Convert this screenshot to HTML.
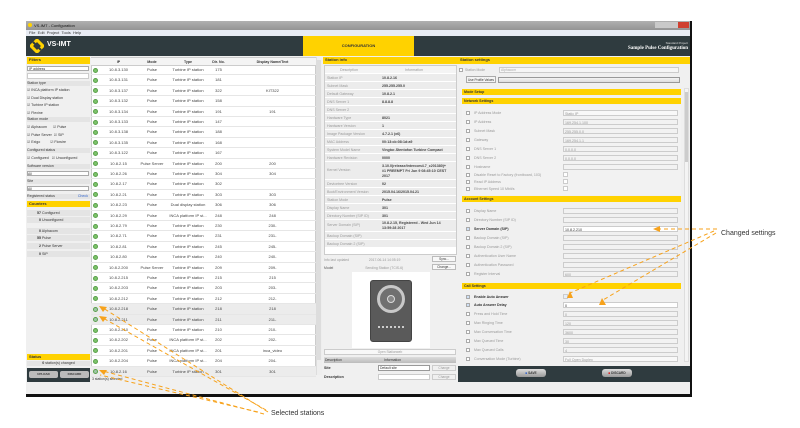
<!DOCTYPE html>
<html><head><meta charset="utf-8"><style>
*{margin:0;padding:0;box-sizing:border-box}
body{width:800px;height:428px;background:#fff;position:relative;overflow:hidden;font-family:"Liberation Sans",sans-serif;font-size:4px;color:#333}
.a{position:absolute}
.y{background:#ffd200;color:#333;font-weight:bold;font-size:4px;line-height:6px;padding-left:2px}
.g{background:#e4e4e4}
.tr{position:absolute;left:91px;width:225px;height:10.4px;border-bottom:1px solid #e6e6e6;line-height:10px;font-size:4px;color:#444}
.tr span{position:absolute;text-align:center}
.tr .i{left:2px;top:2.5px;width:5px;height:5px;border-radius:50%;background:#7dc36b;border:1px solid #5aa04a}
.c1{left:10px;width:35px}.c2{left:45px;width:32px}.c3{left:77px;width:40px}.c4{left:117px;width:21px}.c5{left:138px;width:87px}
.sel{background:#ececec}
.ir{position:absolute;left:325px;width:131px;height:8px;line-height:8px;border-bottom:1px solid #fff;background:#ececec;font-size:3.6px}
.ir b{position:absolute;left:2px;color:#999;font-weight:normal}
.ir i{position:absolute;left:57px;font-style:normal;color:#444;font-weight:bold}
.sr{position:absolute;left:465px;width:215px;height:6px;font-size:3.6px;color:#999;line-height:6px}
.sr .cb{position:absolute;left:1px;top:1px;width:4px;height:4px;border:1px solid #aaa;background:#fff}
.sr .l{position:absolute;left:9px}
.sr .f{position:absolute;left:98px;width:115px;height:6px;border:1px solid #ccc;background:#f2f2f2;padding-left:1px}
.bar{position:absolute;left:462px;width:219px;height:6px;background:#ffd200;font-weight:bold;font-size:3.6px;line-height:6px;padding-left:2px}
.lf{position:absolute;left:27px;width:63px;font-size:3.6px;line-height:6px}
</style></head><body>
<div class="a" style="left:26px;top:21px;width:666px;height:376px;background:#f0f0f0"></div>
<div class="a" style="left:26px;top:21px;width:666px;height:9px;background:linear-gradient(#b0b0b0,#949494);color:#111;font-size:4px;line-height:9px;padding-left:8px">VS-IMT - Configuration</div>
<div class="a" style="left:28px;top:23px;width:4px;height:4px;border-radius:50%;background:#ffd200"></div>
<div class="a" style="left:655px;top:22px;width:34px;height:6px;background:#c9c9c9"></div>
<div class="a" style="left:678px;top:22px;width:11px;height:6px;background:#d04030"></div>
<div class="a" style="left:26px;top:30px;width:666px;height:6px;background:#e8ecf4;font-size:4px;line-height:6px;padding-left:3px">File&nbsp;&nbsp;Edit&nbsp;&nbsp;Project&nbsp;&nbsp;Tools&nbsp;&nbsp;Help</div>
<div class="a" style="left:26px;top:36px;width:666px;height:20px;background:#2f3b3f"></div>
<svg class="a" style="left:30px;top:39px" width="14" height="14" viewBox="0 0 14 14"><path d="M7 1 L13 7 L7 13 L1 7Z" fill="none" stroke="#ffd200" stroke-width="3"/><path d="M3 3 L11 11" stroke="#2f3b3f" stroke-width="2"/></svg>
<div class="a" style="left:47px;top:41px;color:#fff;font-weight:bold;font-size:7px">VS-IMT</div>
<div class="a" style="left:303px;top:36px;width:111px;height:20px;background:#ffd200;text-align:center;line-height:20px;font-weight:bold;font-size:4px">CONFIGURATION</div>
<div class="a" style="left:600px;top:41px;width:88px;text-align:right;color:#ddd;font-size:3px">Standard Project</div>
<div class="a" style="left:560px;top:46px;width:128px;text-align:right;color:#fff;font-weight:bold;font-size:5px;font-family:'Liberation Serif',serif">Sample Pulse Configuration</div>

<div class="a y" style="left:27px;top:57px;width:63px;height:7px">Filters</div>
<div class="a" style="left:27px;top:66px;width:62px;height:5px;background:#fff;border:1px solid #aaa;font-size:3.4px;line-height:4px;padding-left:1px">IP address</div>
<div class="a" style="left:27px;top:73px;width:62px;height:6px;background:#fff;border:1px solid #ccc"></div>
<div class="lf g" style="top:81px;height:5px;line-height:5px">Station type</div>
<div class="lf" style="top:87px">☑ INCA platform IP station</div>
<div class="lf" style="top:95px">☑ Dual Display station</div>
<div class="lf" style="top:102px">☑ Turbine IP station</div>
<div class="lf" style="top:110px">☑ Flexine</div>
<div class="lf g" style="top:117px;height:5px;line-height:5px">Station mode</div>
<div class="lf" style="top:124px">☑ Alphacom &nbsp;&nbsp;&nbsp;&nbsp;&nbsp;☑ Pulse</div>
<div class="lf" style="top:132px">☑ Pulse Server &nbsp;☑ SIP</div>
<div class="lf" style="top:139px">☑ Exigo &nbsp;&nbsp;&nbsp;&nbsp;&nbsp;&nbsp;&nbsp;&nbsp;&nbsp;☑ Flowire</div>
<div class="lf g" style="top:148px;height:5px;line-height:5px">Configured status</div>
<div class="lf" style="top:155px">☑ Configured &nbsp;&nbsp;☑ Unconfigured</div>
<div class="lf g" style="top:164px;height:5px;line-height:5px">Software version</div>
<div class="a" style="left:27px;top:171px;width:62px;height:5px;background:#fff;border:1px solid #aaa;font-size:3.4px;line-height:4px">All</div>
<div class="lf g" style="top:179px;height:5px;line-height:5px">Site</div>
<div class="a" style="left:27px;top:186px;width:62px;height:5px;background:#fff;border:1px solid #aaa;font-size:3.4px;line-height:4px">All</div>
<div class="lf g" style="top:194px;height:5px;line-height:5px">Registered status <span style="float:right;color:#36c;padding-right:2px">Check</span></div>
<div class="a y" style="left:27px;top:201px;width:63px;height:6px">Counters</div>
<div class="lf g" style="top:210px;line-height:6px;padding-left:10px"><b>57</b> Configured</div>
<div class="lf g" style="top:217px;line-height:6px;padding-left:12px"><b>0</b> Unconfigured</div>
<div class="lf g" style="top:228px;line-height:6px;padding-left:12px"><b>0</b> Alphacom</div>
<div class="lf g" style="top:235px;line-height:6px;padding-left:10px"><b>55</b> Pulse</div>
<div class="lf g" style="top:243px;line-height:6px;padding-left:12px"><b>2</b> Pulse Server</div>
<div class="lf g" style="top:251px;line-height:6px;padding-left:12px"><b>0</b> SIP</div>
<div class="a y" style="left:27px;top:354px;width:63px;height:6px">Status</div>
<div class="lf g" style="top:361px;line-height:5px;height:5px;text-align:center"><b>0</b> station(s) changed</div>
<div class="a" style="left:27px;top:368px;width:63px;height:14px;background:#2f3b3f"></div>
<div class="a" style="left:29px;top:371px;width:29px;height:7px;background:#bbb;border-radius:2px;font-size:3px;line-height:7px;text-align:center;font-weight:bold">UPLOAD</div>
<div class="a" style="left:60px;top:371px;width:29px;height:7px;background:#bbb;border-radius:2px;font-size:3px;line-height:7px;text-align:center;font-weight:bold">DISCARD</div>

<div class="a" style="left:91px;top:57px;width:225px;height:318px;background:#fff;border:1px solid #ccc"></div>
<div class="a" style="left:91px;top:58px;width:225px;height:8px;background:#f4f4f4;border-bottom:1px solid #ccc;font-weight:bold;font-size:3.6px;line-height:8px">
<span class="a" style="left:10px;width:35px;text-align:center">IP</span><span class="a" style="left:45px;width:32px;text-align:center">Mode</span><span class="a" style="left:77px;width:40px;text-align:center">Type</span><span class="a" style="left:117px;width:21px;text-align:center">Dir. No.</span><span class="a" style="left:138px;width:87px;text-align:center">Display Name/Text</span></div>
<div class="a" style="left:316px;top:57px;width:6px;height:318px;background:#eee;border-left:1px solid #ddd"></div>
<div class="a" style="left:317px;top:60px;width:4px;height:300px;background:#ddd"></div>

<div class="tr" style="top:65px"><span class="i"></span><span class="c1">10.8.3.130</span><span class="c2">Pulse</span><span class="c3">Turbine IP station</span><span class="c4">175</span><span class="c5"></span></div>
<div class="tr" style="top:75.4px"><span class="i"></span><span class="c1">10.8.3.131</span><span class="c2">Pulse</span><span class="c3">Turbine IP station</span><span class="c4">181</span><span class="c5"></span></div>
<div class="tr" style="top:85.8px"><span class="i"></span><span class="c1">10.8.3.137</span><span class="c2">Pulse</span><span class="c3">Turbine IP station</span><span class="c4">322</span><span class="c5">KIT322</span></div>
<div class="tr" style="top:96.2px"><span class="i"></span><span class="c1">10.8.3.132</span><span class="c2">Pulse</span><span class="c3">Turbine IP station</span><span class="c4">158</span><span class="c5"></span></div>
<div class="tr" style="top:106.6px"><span class="i"></span><span class="c1">10.8.3.134</span><span class="c2">Pulse</span><span class="c3">Turbine IP station</span><span class="c4">191</span><span class="c5">191</span></div>
<div class="tr" style="top:117px"><span class="i"></span><span class="c1">10.8.3.133</span><span class="c2">Pulse</span><span class="c3">Turbine IP station</span><span class="c4">147</span><span class="c5"></span></div>
<div class="tr" style="top:127.4px"><span class="i"></span><span class="c1">10.8.3.138</span><span class="c2">Pulse</span><span class="c3">Turbine IP station</span><span class="c4">188</span><span class="c5"></span></div>
<div class="tr" style="top:137.8px"><span class="i"></span><span class="c1">10.8.3.135</span><span class="c2">Pulse</span><span class="c3">Turbine IP station</span><span class="c4">168</span><span class="c5"></span></div>
<div class="tr" style="top:148.2px"><span class="i"></span><span class="c1">10.8.3.122</span><span class="c2">Pulse</span><span class="c3">Turbine IP station</span><span class="c4">167</span><span class="c5"></span></div>
<div class="tr" style="top:158.6px"><span class="i"></span><span class="c1">10.8.2.15</span><span class="c2">Pulse Server</span><span class="c3">Turbine IP station</span><span class="c4">200</span><span class="c5">200</span></div>
<div class="tr" style="top:169px"><span class="i"></span><span class="c1">10.8.2.26</span><span class="c2">Pulse</span><span class="c3">Turbine IP station</span><span class="c4">304</span><span class="c5">304</span></div>
<div class="tr" style="top:179.4px"><span class="i"></span><span class="c1">10.8.2.17</span><span class="c2">Pulse</span><span class="c3">Turbine IP station</span><span class="c4">302</span><span class="c5"></span></div>
<div class="tr" style="top:189.8px"><span class="i"></span><span class="c1">10.8.2.21</span><span class="c2">Pulse</span><span class="c3">Turbine IP station</span><span class="c4">303</span><span class="c5">303</span></div>
<div class="tr" style="top:200.2px"><span class="i"></span><span class="c1">10.8.2.23</span><span class="c2">Pulse</span><span class="c3">Dual display station</span><span class="c4">306</span><span class="c5">306</span></div>
<div class="tr" style="top:210.6px"><span class="i"></span><span class="c1">10.8.2.29</span><span class="c2">Pulse</span><span class="c3">INCA platform IP st...</span><span class="c4">248</span><span class="c5">248</span></div>
<div class="tr" style="top:221px"><span class="i"></span><span class="c1">10.8.2.79</span><span class="c2">Pulse</span><span class="c3">Turbine IP station</span><span class="c4">230</span><span class="c5">230-</span></div>
<div class="tr" style="top:231.4px"><span class="i"></span><span class="c1">10.8.2.71</span><span class="c2">Pulse</span><span class="c3">Turbine IP station</span><span class="c4">231</span><span class="c5">231-</span></div>
<div class="tr" style="top:241.8px"><span class="i"></span><span class="c1">10.8.2.81</span><span class="c2">Pulse</span><span class="c3">Turbine IP station</span><span class="c4">245</span><span class="c5">245-</span></div>
<div class="tr" style="top:252.2px"><span class="i"></span><span class="c1">10.8.2.80</span><span class="c2">Pulse</span><span class="c3">Turbine IP station</span><span class="c4">240</span><span class="c5">240-</span></div>
<div class="tr" style="top:262.6px"><span class="i"></span><span class="c1">10.8.2.200</span><span class="c2">Pulse Server</span><span class="c3">Turbine IP station</span><span class="c4">209</span><span class="c5">209-</span></div>
<div class="tr" style="top:273px"><span class="i"></span><span class="c1">10.8.2.215</span><span class="c2">Pulse</span><span class="c3">Turbine IP station</span><span class="c4">215</span><span class="c5">215</span></div>
<div class="tr" style="top:283.4px"><span class="i"></span><span class="c1">10.8.2.203</span><span class="c2">Pulse</span><span class="c3">Turbine IP station</span><span class="c4">203</span><span class="c5">203-</span></div>
<div class="tr" style="top:293.8px"><span class="i"></span><span class="c1">10.8.2.212</span><span class="c2">Pulse</span><span class="c3">Turbine IP station</span><span class="c4">212</span><span class="c5">212-</span></div>
<div class="tr sel" style="top:304.2px"><span class="i" style="background:#9fc6a8"></span><span class="c1">10.8.2.218</span><span class="c2">Pulse</span><span class="c3">Turbine IP station</span><span class="c4">218</span><span class="c5">218</span></div>
<div class="tr sel" style="top:314.6px"><span class="i" style="background:#9fc6a8"></span><span class="c1">10.8.2.211</span><span class="c2">Pulse</span><span class="c3">Turbine IP station</span><span class="c4">211</span><span class="c5">211-</span></div>
<div class="tr" style="top:325px"><span class="i"></span><span class="c1">10.8.2.210</span><span class="c2">Pulse</span><span class="c3">Turbine IP station</span><span class="c4">210</span><span class="c5">210-</span></div>
<div class="tr" style="top:335.4px"><span class="i"></span><span class="c1">10.8.2.202</span><span class="c2">Pulse</span><span class="c3">INCA platform IP st...</span><span class="c4">202</span><span class="c5">202-</span></div>
<div class="tr" style="top:345.8px"><span class="i"></span><span class="c1">10.8.2.201</span><span class="c2">Pulse</span><span class="c3">INCA platform IP st...</span><span class="c4">201</span><span class="c5">inca_video</span></div>
<div class="tr" style="top:356.2px"><span class="i"></span><span class="c1">10.8.2.204</span><span class="c2">Pulse</span><span class="c3">INCA platform IP st...</span><span class="c4">204</span><span class="c5">204-</span></div>
<div class="tr sel" style="top:366.6px"><span class="i" style="background:#9fc6a8"></span><span class="c1">10.8.2.16</span><span class="c2">Pulse</span><span class="c3">Turbine IP station</span><span class="c4">301</span><span class="c5">301</span></div>
<div class="a" style="left:92px;top:377px;font-size:3.4px">3 station(s) selected</div>

<div class="a y" style="left:323px;top:57px;width:135px;height:7px">Station info</div>
<div class="a" style="left:324px;top:65px;width:133px;height:190px;background:#fff;border:1px solid #ccc"></div>
<div class="ir" style="top:66px;background:#f4f4f4"><b style="left:15px">Description</b><i style="left:80px;color:#999;font-weight:normal">Information</i></div>
<div class="ir" style="top:74px"><b>Station IP</b><i>10.8.2.16</i></div>
<div class="ir" style="top:82px"><b>Subnet Mask</b><i>255.255.255.0</i></div>
<div class="ir" style="top:90px"><b>Default Gateway</b><i>10.8.2.1</i></div>
<div class="ir" style="top:98px"><b>DNS Server 1</b><i>8.8.8.8</i></div>
<div class="ir" style="top:106px"><b>DNS Server 2</b><i></i></div>
<div class="ir" style="top:114px"><b>Hardware Type</b><i>8021</i></div>
<div class="ir" style="top:122px"><b>Hardware Version</b><i>1</i></div>
<div class="ir" style="top:130px"><b>Image Package Version</b><i>4.7.2.1 (x6)</i></div>
<div class="ir" style="top:138px"><b>MAC Address</b><i>00:13:cb:08:1d:a9</i></div>
<div class="ir" style="top:146px"><b>System Model Name</b><i>Vingtor-Stentofon Turbine Compact</i></div>
<div class="ir" style="top:154px"><b>Hardware Revision</b><i>0000</i></div>
<div class="ir" style="top:162px;height:18px;line-height:5px"><b style="top:6px">Kernel Version</b><i style="top:2px">3.10.0(release/intercom4.7_c201380)+<br>#1 PREEMPT Fri Jun 9 08:45:10 CEST<br>2017</i></div>
<div class="ir" style="top:180px"><b>Devicetree Version</b><i>02</i></div>
<div class="ir" style="top:188px"><b>Boot/Environment Version</b><i>2015.04.16/2015.04.21</i></div>
<div class="ir" style="top:196px"><b>Station Mode</b><i>Pulse</i></div>
<div class="ir" style="top:204px"><b>Display Name</b><i>301</i></div>
<div class="ir" style="top:212px"><b>Directory Number (SIP ID)</b><i>301</i></div>
<div class="ir" style="top:220px;height:12px;line-height:5px"><b style="top:3px">Server Domain (SIP)</b><i style="top:1px">10.8.2.15, Registered - Wed Jun 14<br>13:59:28 2017</i></div>
<div class="ir" style="top:232px"><b>Backup Domain (SIP)</b><i></i></div>
<div class="ir" style="top:240px"><b>Backup Domain 2 (SIP)</b><i></i></div>
<div class="a" style="left:324px;top:258px;font-size:3.4px;color:#999">Info last updated &nbsp;&nbsp;&nbsp;&nbsp;&nbsp;&nbsp;&nbsp;&nbsp;&nbsp;&nbsp;&nbsp;&nbsp;&nbsp;&nbsp;&nbsp;&nbsp;&nbsp;&nbsp;&nbsp;&nbsp;2017-06-14 14:05:19</div>
<div class="a" style="left:324px;top:266px;font-size:3.4px;color:#555">Model &nbsp;&nbsp;&nbsp;&nbsp;&nbsp;&nbsp;&nbsp;&nbsp;&nbsp;&nbsp;&nbsp;&nbsp;&nbsp;&nbsp;&nbsp;&nbsp;&nbsp;&nbsp;&nbsp;&nbsp;&nbsp;&nbsp;&nbsp;&nbsp;&nbsp;&nbsp;&nbsp;&nbsp;&nbsp;&nbsp;&nbsp;&nbsp;&nbsp;<span style="color:#999">Sending Station (TCIS-6)</span></div>
<div class="a" style="left:432px;top:256px;width:24px;height:6px;border:1px solid #bbb;background:#f8f8f8;font-size:3.2px;text-align:center;line-height:5px">Sync...</div>
<div class="a" style="left:432px;top:264px;width:24px;height:6px;border:1px solid #bbb;background:#f8f8f8;font-size:3.2px;text-align:center;line-height:5px">Change...</div>
<div class="a" style="left:352px;top:272px;width:78px;height:76px;background:#fff"></div>
<div class="a" style="left:370px;top:280px;width:42px;height:62px;background:#5a5a5a;border-radius:3px;border:1px solid #444"></div>
<div class="a" style="left:377px;top:285px;width:28px;height:28px;border-radius:50%;border:3px solid #c8c8c8;background:#707070"></div>
<div class="a" style="left:387px;top:295px;width:8px;height:8px;border-radius:50%;border:1px solid #ddd;background:#888"></div>
<div class="a" style="left:378px;top:326px;width:26px;height:3px;border-top:2px dotted #ccc"></div>

<div class="a" style="left:324px;top:349px;width:132px;height:6px;border:1px solid #ccc;background:#f8f8f8;font-size:3.2px;text-align:center;line-height:5px;color:#999">Open Stationweb</div>
<div class="a" style="left:324px;top:357px;width:132px;height:6px;background:linear-gradient(#ddd,#bbb);font-size:3.4px;line-height:6px">&nbsp;Description<span style="position:absolute;left:60px">Information</span></div>
<div class="a" style="left:324px;top:366px;font-size:3.6px;font-weight:bold">Site</div>
<div class="a" style="left:378px;top:365px;width:52px;height:6px;border:1px solid #999;background:#fff;font-size:3.4px;line-height:5px">&nbsp;Default site</div>
<div class="a" style="left:432px;top:365px;width:24px;height:6px;border:1px solid #ccc;font-size:3.2px;text-align:center;line-height:5px;color:#999">Change</div>
<div class="a" style="left:324px;top:375px;font-size:3.6px;font-weight:bold">Description</div>
<div class="a" style="left:378px;top:374px;width:52px;height:6px;border:1px solid #ccc;background:#fff"></div>
<div class="a" style="left:432px;top:374px;width:24px;height:6px;border:1px solid #ccc;font-size:3.2px;text-align:center;line-height:5px;color:#999">Change</div>

<div class="a y" style="left:458px;top:57px;width:233px;height:7px">Station settings</div>
<div class="a" style="left:459px;top:68px;width:4px;height:4px;border:1px solid #aaa;background:#fff"></div>
<div class="a" style="left:465px;top:67px;font-size:3.4px;color:#999;line-height:6px">Station Mode</div>
<div class="a" style="left:499px;top:67px;width:180px;height:6px;border:1px solid #ccc;background:#f6f6f6;font-size:3.4px;color:#aaa;line-height:5px">&nbsp;Alphacom</div>
<div class="a" style="left:466px;top:76px;width:30px;height:7px;border:1px solid #aaa;background:#f4f4f4;font-size:3.2px;line-height:6px;text-align:center">Use Profile Values</div>
<div class="a" style="left:498px;top:77px;width:182px;height:6px;border:1px solid #999;background:linear-gradient(#f4f4f4,#ddd)"></div>
<div class="bar" style="top:89px">Mode Setup</div>
<div class="bar" style="top:98px">Network Settings</div>
<div class="a" style="left:462px;top:105px;width:219px;height:90px;background:#f2f2f2"></div>
<div class="sr" style="top:110px"><span class="cb"></span><span class="l">IP Address Mode</span><span class="f" style="background:#f8f8f8">Static IP</span></div>
<div class="sr" style="top:119px"><span class="cb"></span><span class="l">IP Address</span><span class="f">169.254.1.100</span></div>
<div class="sr" style="top:128px"><span class="cb"></span><span class="l">Subnet Mask</span><span class="f">255.255.0.0</span></div>
<div class="sr" style="top:137px"><span class="cb"></span><span class="l">Gateway</span><span class="f">169.254.1.1</span></div>
<div class="sr" style="top:146px"><span class="cb"></span><span class="l">DNS Server 1</span><span class="f">0.0.0.0</span></div>
<div class="sr" style="top:155px"><span class="cb"></span><span class="l">DNS Server 2</span><span class="f">0.0.0.0</span></div>
<div class="sr" style="top:164px"><span class="cb"></span><span class="l">Hostname</span><span class="f"></span></div>
<div class="sr" style="top:172px"><span class="cb"></span><span class="l">Disable Reset to Factory (frontboard, 103)</span><span class="f" style="width:5px;height:5px;background:#fff"></span></div>
<div class="sr" style="top:179px"><span class="cb"></span><span class="l">Read IP Address</span><span class="f" style="width:5px;height:5px;background:#fff"></span></div>
<div class="sr" style="top:186px"><span class="cb"></span><span class="l">Ethernet Speed 10 Mbit/s</span><span class="f" style="width:5px;height:5px;background:#fff"></span></div>
<div class="bar" style="top:196px">Account Settings</div>
<div class="sr" style="top:208px"><span class="cb"></span><span class="l">Display Name</span><span class="f"></span></div>
<div class="sr" style="top:217px"><span class="cb"></span><span class="l">Directory Number (SIP ID)</span><span class="f"></span></div>
<div class="sr" style="top:226px;color:#333;font-weight:bold"><span class="cb" style="background:#cfe0f5"></span><span class="l">Server Domain (SIP)</span><span class="f" style="background:#fff;color:#333;font-weight:normal">10.8.2.210</span></div>
<div class="sr" style="top:235px"><span class="cb"></span><span class="l">Backup Domain (SIP)</span><span class="f"></span></div>
<div class="sr" style="top:244px"><span class="cb"></span><span class="l">Backup Domain 2 (SIP)</span><span class="f"></span></div>
<div class="sr" style="top:253px"><span class="cb"></span><span class="l">Authentication User Name</span><span class="f"></span></div>
<div class="sr" style="top:262px"><span class="cb"></span><span class="l">Authentication Password</span><span class="f"></span></div>
<div class="sr" style="top:271px"><span class="cb"></span><span class="l">Register Interval</span><span class="f">600</span></div>
<div class="bar" style="top:283px">Call Settings</div>
<div class="sr" style="top:294px;color:#333;font-weight:bold"><span class="cb" style="background:#cfe0f5"></span><span class="l">Enable Auto Answer</span><span class="f" style="width:5px;height:5px;background:#e6eef8"></span></div>
<div class="sr" style="top:302px;color:#333;font-weight:bold"><span class="cb" style="background:#cfe0f5"></span><span class="l">Auto Answer Delay</span><span class="f" style="background:#fff;color:#333;font-weight:normal">0</span></div>
<div class="sr" style="top:311px"><span class="cb"></span><span class="l">Press and Hold Time</span><span class="f">0</span></div>
<div class="sr" style="top:320px"><span class="cb"></span><span class="l">Max Ringing Time</span><span class="f">120</span></div>
<div class="sr" style="top:329px"><span class="cb"></span><span class="l">Max Conversation Time</span><span class="f">3600</span></div>
<div class="sr" style="top:338px"><span class="cb"></span><span class="l">Max Queued Time</span><span class="f">30</span></div>
<div class="sr" style="top:347px"><span class="cb"></span><span class="l">Max Queued Calls</span><span class="f">4</span></div>
<div class="sr" style="top:356px"><span class="cb"></span><span class="l">Conversation Mode (Turbine)</span><span class="f" style="background:#f8f8f8">Full Open Duplex</span></div>
<div class="a" style="left:684px;top:88px;width:5px;height:274px;background:#f4f4f4;border:1px solid #ddd"></div>
<div class="a" style="left:685px;top:92px;width:3px;height:70px;background:#ccc"></div>
<div class="a" style="left:458px;top:366px;width:232px;height:16px;background:#2f3b3f"></div>
<div class="a" style="left:516px;top:369px;width:30px;height:8px;border-radius:3px;background:linear-gradient(#ddd,#999);font-size:3.2px;font-weight:bold;line-height:8px;text-align:center"><span style="color:#36c">■</span> SAVE</div>
<div class="a" style="left:602px;top:369px;width:30px;height:8px;border-radius:3px;background:linear-gradient(#ddd,#999);font-size:3.2px;font-weight:bold;line-height:8px;text-align:center"><span style="color:#d22">■</span> DISCARD</div>
<div class="a" style="left:26px;top:394px;width:666px;height:3px;background:#111"></div>
<div class="a" style="left:690px;top:21px;width:2px;height:376px;background:#111"></div>

<svg class="a" style="left:0;top:0" width="800" height="428">
<g stroke="#f7a21b" stroke-width="1" stroke-dasharray="4,3" fill="none">
<path d="M268 412 L103 308"/><path d="M266 410 L103 318"/><path d="M264 414 L103 371"/><path d="M258 412 L100 375"/>
<path d="M717 229 L660 229"/><path d="M714 231 L570 293"/><path d="M716 233 L603 300"/>
</g>
<g fill="#f7a21b">
<path d="M99 306 L107 307 L103 312Z"/><path d="M99 316 L107 317 L103 322Z"/><path d="M99 370 L107 370 L104 375Z"/>
<path d="M653 229 L660 226 L660 232Z"/><path d="M567 298 L570 291 L573 298Z"/><path d="M599 305 L602 298 L606 305Z"/>
</g>
<text x="271" y="415" font-family="Liberation Sans" font-size="7" fill="#333">Selected stations</text>
<text x="721" y="235" font-family="Liberation Sans" font-size="7" fill="#333">Changed settings</text>
</svg>
</body></html>
